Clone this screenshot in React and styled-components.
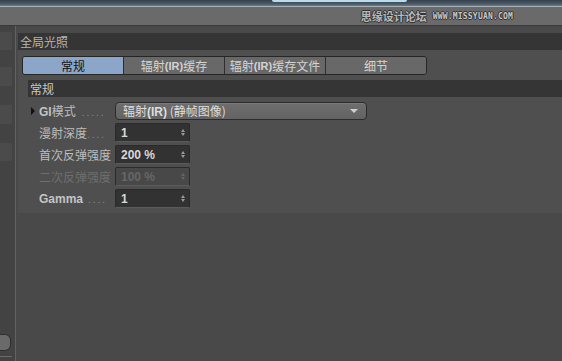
import React from 'react';
import styled, { createGlobalStyle } from 'styled-components';

const GlobalStyle = createGlobalStyle`
  html, body {
    margin: 0;
    padding: 0;
    background: #4a4a4a;
  }
  * {
    box-sizing: border-box;
  }
`;

const CJK = `"Noto Sans CJK SC", "Noto Sans", sans-serif`;
const LATIN = `"Liberation Sans", Arial, "Noto Sans CJK SC", sans-serif`;

const Screen = styled.div`
  width: 562px;
  height: 361px;
  overflow: hidden;
  display: flex;
  flex-direction: column;
  background: #494949;
  font-family: ${CJK};
`;

const TitleStrip = styled.div`
  height: 7px;
  flex: none;
  display: flex;
  align-items: flex-start;
  background: linear-gradient(180deg, #34404c 0%, #4a5866 60%, #6c7884 100%);
  border-bottom: 1px solid #a8b0b8;
`;

const Highlight = styled.div`
  margin-left: 272px;
  width: 135px;
  height: 2px;
  background: #b9dcea;
  border-radius: 0 0 3px 3px;
`;

const TopBar = styled.div`
  height: 19px;
  flex: none;
  display: flex;
  align-items: center;
  justify-content: flex-end;
  gap: 6px;
  padding-right: 49px;
  background: #6a6a6a;
  border-bottom: 1px solid #3a3a3a;
`;

const MarkCn = styled.span`
  font-family: ${CJK};
  font-size: 11px;
  font-weight: 700;
  color: #b8b8b8;
  letter-spacing: 0;
  text-shadow: 1px 0 0 #333, -1px 0 0 #333, 0 1px 0 #333, 0 -1px 0 #333;
`;

const MarkEn = styled.span`
  font-family: "DejaVu Sans Mono", monospace;
  font-size: 8px;
  font-weight: 700;
  color: #c8c8c8;
  letter-spacing: 0.2px;
  text-shadow: 1px 0 0 #333, -1px 0 0 #333, 0 1px 0 #333, 0 -1px 0 #333;
`;

const Body = styled.div`
  flex: 1;
  display: flex;
  min-height: 0;
`;

const Rail = styled.div`
  width: 16px;
  flex: none;
  display: flex;
  flex-direction: column;
  background: #434343;
  border-right: 1px solid #626262;
  padding-top: 6px;
`;

const RailStripe = styled.div`
  height: ${(p) => p.$h}px;
  margin-bottom: ${(p) => p.$gap}px;
  width: 12px;
  background: #4b4b4b;
`;

const RailSpacer = styled.div`
  flex: 1;
`;

const RailButton = styled.div`
  width: 11px;
  height: 17px;
  border-radius: 0 6px 6px 0;
  background: #6a6a6a;
  border: 1px solid #2f2f2f;
  border-left: none;
`;

const RailLine = styled.div`
  height: 1px;
  width: 12px;
  margin: 5px 0 4px;
  background: #6a6a6a;
`;

const Main = styled.div`
  flex: 1;
  padding: 7px 0 0 2px;
  display: flex;
  flex-direction: column;
`;

const GroupTitle = styled.div`
  height: 17px;
  background: #353535;
  color: #b4b4b4;
  font-size: 12px;
  line-height: 17px;
  padding-left: 2px;
`;

const Group = styled.div`
  background: #4f4f4f;
  padding-bottom: 5px;
`;

const TabBar = styled.div`
  display: flex;
  margin: 6px 0 5px 4px;
  width: 405px;
  height: 19px;
  border: 1px solid #262626;
  border-radius: 3px;
  overflow: hidden;
`;

const Tab = styled.div`
  flex: 1;
  display: flex;
  align-items: center;
  justify-content: center;
  font-size: 12px;
  color: ${(p) => (p.$active ? '#111' : '#d4d4d4')};
  background: ${(p) => (p.$active ? '#8ba6c9' : '#686868')};
  & + & {
    border-left: 1px solid #2e2e2e;
  }
`;

const Latin = styled.b`
  font-family: ${LATIN};
  font-size: ${(p) => p.$size || 11}px;
  font-weight: 700;
  color: ${(p) => p.$color || 'inherit'};
`;

const SectionTitle = styled.div`
  height: 17px;
  margin-left: 10px;
  background: #353535;
  color: #c8c8c8;
  font-size: 12px;
  line-height: 17px;
  padding-left: 2px;
`;

const Rows = styled.div`
  display: flex;
  flex-direction: column;
  gap: 3px;
  padding: 4px 0 0 13px;
`;

const Row = styled.div`
  display: flex;
  align-items: center;
  height: 19px;
`;

const Arrow = styled.span`
  width: 8px;
  flex: none;
  display: flex;
  align-items: center;
  &::before {
    content: '';
    display: ${(p) => (p.$show ? 'block' : 'none')};
    border-left: 4px solid #111;
    border-top: 4px solid transparent;
    border-bottom: 4px solid transparent;
  }
`;

const Label = styled.div`
  width: 76px;
  flex: none;
  display: flex;
  align-items: baseline;
  white-space: nowrap;
  overflow: hidden;
  font-size: 12px;
  color: ${(p) => (p.$disabled ? '#6e6e6e' : '#bdbdbd')};
`;

const Dots = styled.span`
  font-family: ${LATIN};
  font-size: 10px;
  color: #8a8a8a;
  letter-spacing: 2px;
  margin-left: ${(p) => p.$gap || 0}px;
`;

const Dropdown = styled.div`
  width: 252px;
  height: 18px;
  border: 1px solid #2c2c2c;
  border-radius: 4px;
  background: linear-gradient(180deg, #6e6e6e 0%, #636363 100%);
  display: flex;
  align-items: center;
  padding: 0 8px 0 7px;
  font-size: 12px;
  color: #dedede;
  box-shadow: inset 0 1px 0 #7a7a7a;
`;

const DropText = styled.span`
  flex: 1;
`;

const Caret = styled.span`
  border-top: 4px solid #d0d0d0;
  border-left: 4px solid transparent;
  border-right: 4px solid transparent;
`;

const Field = styled.div`
  width: 75px;
  height: 19px;
  border: 1px solid #2a2a2a;
  border-bottom-color: #5a5a5a;
  border-radius: 2px;
  background: ${(p) => (p.$disabled ? '#484848' : '#323232')};
  display: flex;
  align-items: center;
  padding: 0 4px 0 5px;
`;

const FieldValue = styled.span`
  flex: 1;
  font-family: ${LATIN};
  font-size: 12px;
  font-weight: 700;
  color: ${(p) => (p.$disabled ? '#666' : '#d8d8d8')};
`;

const Spinner = styled.span`
  display: flex;
  flex-direction: column;
  gap: 1px;
  opacity: ${(p) => (p.$disabled ? 0.35 : 1)};
  &::before, &::after {
    content: '';
    border-left: 2.5px solid transparent;
    border-right: 2.5px solid transparent;
  }
  &::before {
    border-bottom: 3px solid #9a9a9a;
  }
  &::after {
    border-top: 3px solid #9a9a9a;
  }
`;

const NumberField = ({ value, disabled }) => (
  <Field $disabled={disabled}>
    <FieldValue $disabled={disabled}>{value}</FieldValue>
    <Spinner $disabled={disabled} />
  </Field>
);

const stripes = [
  { h: 18, gap: 17 },
  { h: 19, gap: 19 },
  { h: 19, gap: 19 },
  { h: 18, gap: 0 },
];

const App = () => (
  <Screen>
    <GlobalStyle />
    <TitleStrip>
      <Highlight />
    </TitleStrip>
    <TopBar>
      <MarkCn>思缘设计论坛</MarkCn>
      <MarkEn>WWW.MISSYUAN.COM</MarkEn>
    </TopBar>
    <Body>
      <Rail>
        {stripes.map((s, i) => (
          <RailStripe key={i} $h={s.h} $gap={s.gap} />
        ))}
        <RailSpacer />
        <RailButton />
        <RailLine />
      </Rail>
      <Main>
        <GroupTitle>全局光照</GroupTitle>
        <Group>
          <TabBar>
            <Tab $active>常规</Tab>
            <Tab>辐射<Latin>(IR)</Latin>缓存</Tab>
            <Tab>辐射<Latin>(IR)</Latin>缓存文件</Tab>
            <Tab>细节</Tab>
          </TabBar>
          <SectionTitle>常规</SectionTitle>
          <Rows>
            <Row>
              <Arrow $show />
              <Label>
                <Latin $size={12} $color="#c4c4c4">GI</Latin>模式<Dots $gap={6}>.....</Dots>
              </Label>
              <Dropdown>
                <DropText>
                  辐射<Latin $size={12}>(IR)</Latin> (静帧图像)
                </DropText>
                <Caret />
              </Dropdown>
            </Row>
            <Row>
              <Arrow />
              <Label>
                漫射深度<Dots>....</Dots>
              </Label>
              <NumberField value="1" />
            </Row>
            <Row>
              <Arrow />
              <Label>首次反弹强度</Label>
              <NumberField value="200 %" />
            </Row>
            <Row>
              <Arrow />
              <Label $disabled>二次反弹强度</Label>
              <NumberField value="100 %" disabled />
            </Row>
            <Row>
              <Arrow />
              <Label>
                <Latin $size={12} $color="#c4c4c4">Gamma</Latin>
                <Dots $gap={5}>....</Dots>
              </Label>
              <NumberField value="1" />
            </Row>
          </Rows>
        </Group>
      </Main>
    </Body>
  </Screen>
);

export default App;
